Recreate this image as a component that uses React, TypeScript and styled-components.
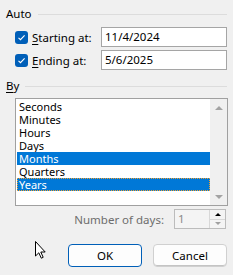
import React from "react";
import styled, { createGlobalStyle } from "styled-components";

const FONT = `"Noto Sans", "Open Sans", sans-serif`;

const GlobalStyle = createGlobalStyle`
  html, body {
    margin: 0;
    padding: 0;
    background: #f0f0f0;
  }
  body {
    font-family: ${FONT};
    font-size: 11.5px;
    color: #000;
  }
`;

const units = ["Seconds", "Minutes", "Hours", "Days", "Months", "Quarters", "Years"];
const selected = ["Months", "Years"];
const focused = "Years";

const Dialog = styled.div`
  position: relative;
  width: 233px;
  height: 275px;
  box-sizing: border-box;
  padding: 6px 6px 0 6px;
  background: #f0f0f0;
  border-bottom-right-radius: 8px;
  overflow: hidden;
  display: flex;
  flex-direction: column;
`;

const GroupHeader = styled.div<{ $top: number }>`
  display: flex;
  align-items: center;
  gap: 6px;
  height: 16px;
  margin-top: ${({ $top }) => $top}px;
  line-height: 16px;

  &::after {
    content: "";
    flex: 1;
    height: 1px;
    background: #dcdcdc;
  }
`;

const Key = styled.span`
  text-decoration: underline;
  text-underline-offset: 2px;
`;

const FieldRow = styled.div<{ $top: number }>`
  display: flex;
  align-items: center;
  height: 20px;
  margin-top: ${({ $top }) => $top}px;
  padding-left: 9px;
`;

const Check = styled.span`
  width: 13px;
  height: 13px;
  border-radius: 3px;
  background: #005fb8;
  display: grid;
  place-items: center;
  margin-right: 4px;
  flex: none;
`;

const FieldLabel = styled.span`
  flex: 1;
`;

const TextBox = styled.div`
  width: 126px;
  height: 20px;
  box-sizing: border-box;
  border: 1px solid #a5a5a5;
  background: #fff;
  padding-left: 3px;
  line-height: 18px;
`;

const ListBox = styled.div`
  margin-top: 4px;
  margin-left: 9px;
  width: 213px;
  height: 108px;
  box-sizing: border-box;
  border: 1px solid #a0a0a0;
  background: #fff;
  display: flex;
`;

const Items = styled.div`
  flex: 1;
  padding: 1px 0 0 1px;
`;

const Item = styled.div<{ $selected: boolean; $focused: boolean }>`
  height: 13px;
  line-height: 13px;
  font-size: 11px;
  padding-left: 2px;
  overflow: hidden;
  background: ${({ $selected }) => ($selected ? "#0078d7" : "transparent")};
  color: ${({ $selected }) => ($selected ? "#fff" : "#000")};
  outline: ${({ $focused }) => ($focused ? "1px dotted #f0a030" : "none")};
  outline-offset: -1px;
`;

const ScrollBar = styled.div`
  width: 17px;
  background: #f0f0f0;
  display: flex;
  flex-direction: column;
  justify-content: space-between;
  align-items: center;
  padding: 7px 0 6px;
`;

const Arrow = styled.span<{ $down?: boolean; $color: string; $w: number }>`
  width: 0;
  height: 0;
  border-left: ${({ $w }) => $w}px solid transparent;
  border-right: ${({ $w }) => $w}px solid transparent;
  ${({ $down, $color, $w }) =>
    $down
      ? `border-top: ${$w}px solid ${$color};`
      : `border-bottom: ${$w}px solid ${$color};`}
`;

const DaysRow = styled.div`
  display: flex;
  justify-content: flex-end;
  align-items: center;
  gap: 10px;
  margin-top: 3px;
  padding-right: 1px;
  height: 20px;
  color: #6d6d6d;
`;

const Spinner = styled.div`
  width: 52px;
  height: 20px;
  box-sizing: border-box;
  border: 1px solid #bcbcbc;
  background: #f4f4f4;
  display: flex;
`;

const SpinValue = styled.div`
  flex: 1;
  padding-left: 3px;
  line-height: 18px;
  color: #8a8a8a;
`;

const SpinButtons = styled.div`
  width: 15px;
  border-left: 1px solid #d8d8d8;
  display: flex;
  flex-direction: column;
`;

const SpinHalf = styled.div<{ $bottom?: boolean }>`
  flex: 1;
  display: grid;
  place-items: center;
  border-top: ${({ $bottom }) => ($bottom ? "1px solid #d8d8d8" : "none")};
`;

const Buttons = styled.div`
  display: flex;
  justify-content: flex-end;
  gap: 11px;
  margin-top: 15px;
`;

const Button = styled.button<{ $primary?: boolean }>`
  width: 74px;
  height: 23px;
  box-sizing: border-box;
  font-family: ${FONT};
  font-size: 11.5px;
  color: #000;
  padding: 0;
  border-radius: 4px;
  background: #fdfdfd;
  border: 1px solid ${({ $primary }) => ($primary ? "#005fb8" : "#d0d0d0")};
  box-shadow: ${({ $primary }) => ($primary ? "none" : "inset 0 -1px 0 #c4c4c4")};
`;

const Cursor = styled.svg`
  position: absolute;
  left: 34px;
  top: 240px;
  width: 13px;
  height: 20px;
`;

const CheckMark = () => (
  <svg width="9" height="9" viewBox="0 0 9 9">
    <path d="M1.5 4.8 L3.5 6.7 L7.6 2.4" fill="none" stroke="#fff" strokeWidth="1.1" />
  </svg>
);

export default function App() {
  return (
    <>
      <GlobalStyle />
      <Dialog>
        <GroupHeader $top={0}>Auto</GroupHeader>
        <FieldRow $top={5}>
          <Check>
            <CheckMark />
          </Check>
          <FieldLabel>
            <Key>S</Key>tarting at:
          </FieldLabel>
          <TextBox>11/4/2024</TextBox>
        </FieldRow>
        <FieldRow $top={3}>
          <Check>
            <CheckMark />
          </Check>
          <FieldLabel>
            <Key>E</Key>nding at:
          </FieldLabel>
          <TextBox>5/6/2025</TextBox>
        </FieldRow>
        <GroupHeader $top={8}>
          <span>
            <Key>B</Key>y
          </span>
        </GroupHeader>
        <ListBox>
          <Items>
            {units.map((u) => (
              <Item key={u} $selected={selected.includes(u)} $focused={u === focused}>
                {u}
              </Item>
            ))}
          </Items>
          <ScrollBar>
            <Arrow $color="#a3a3a3" $w={4} />
            <Arrow $down $color="#a3a3a3" $w={4} />
          </ScrollBar>
        </ListBox>
        <DaysRow>
          <span>Number of days:</span>
          <Spinner>
            <SpinValue>1</SpinValue>
            <SpinButtons>
              <SpinHalf>
                <Arrow $color="#000" $w={3} />
              </SpinHalf>
              <SpinHalf $bottom>
                <Arrow $down $color="#a0a0a0" $w={3} />
              </SpinHalf>
            </SpinButtons>
          </Spinner>
        </DaysRow>
        <Buttons>
          <Button $primary>OK</Button>
          <Button>Cancel</Button>
        </Buttons>
        <Cursor viewBox="0 0 13 20">
          <path
            d="M1.5 1.5 L1.5 16 L4.8 12.8 L7.3 18.2 L9.2 17.3 L6.8 12 L11.2 12 Z"
            fill="#fff"
            stroke="#000"
            strokeWidth="1"
            strokeLinejoin="round"
          />
        </Cursor>
      </Dialog>
    </>
  );
}
